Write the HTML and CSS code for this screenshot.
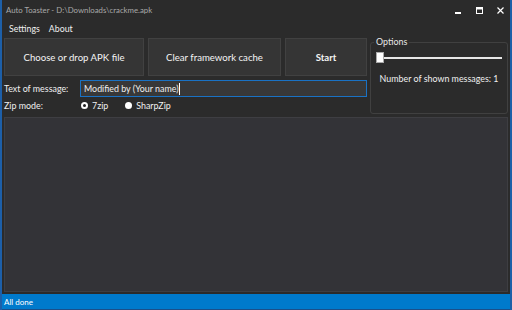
FILE: index.html
```html
<!DOCTYPE html>
<html lang="en">

<head>
    <meta charset="UTF-8">
    <meta name="viewport" content="width=device-width, initial-scale=1.0">
    <title>Auto Toaster</title>
    <link rel="stylesheet" href="styles.css">
</head>

<body>
    <div class="window">
        <div class="titlebar">
            <span class="title">Auto Toaster - D:\Downloads\crackme.apk</span>
            <div class="controls">
                <svg width="10" height="10" viewBox="0 0 10 10"><rect x="1" y="6" width="6" height="2" fill="#fff"/></svg>
                <svg width="10" height="10" viewBox="0 0 10 10"><rect x="1.5" y="1.5" width="6" height="6" fill="none" stroke="#fff" stroke-width="1"/><line x1="1.5" y1="2.5" x2="7.5" y2="2.5" stroke="#fff" stroke-width="2"/></svg>
                <svg width="10" height="10" viewBox="0 0 10 10"><path d="M1.5 1.5 L7.5 7.5 M7.5 1.5 L1.5 7.5" stroke="#fff" stroke-width="1.2"/></svg>
            </div>
        </div>
        <div class="menubar">
            <span>Settings</span>
            <span>About</span>
        </div>
        <div class="top">
            <div class="main">
                <div class="buttons">
                    <div class="btn btn-choose">Choose or drop APK file</div>
                    <div class="btn btn-clear">Clear framework cache</div>
                    <div class="btn btn-start">Start</div>
                </div>
                <div class="row row-text">
                    <label class="label">Text of message:</label>
                    <div class="textbox">Modified by (Your name)<span class="caret"></span></div>
                </div>
                <div class="row row-zip">
                    <label class="label">Zip mode:</label>
                    <div class="radios">
                        <span class="radio checked"></span><span class="radio-text">7zip</span>
                        <span class="radio"></span><span class="radio-text">SharpZip</span>
                    </div>
                </div>
            </div>
            <div class="group">
                <span class="legend">Options</span>
                <div class="slider"><span class="thumb"></span></div>
                <div class="count">Number of shown messages: 1</div>
            </div>
        </div>
        <div class="log"></div>
        <div class="status">All done</div>
    </div>
</body>

</html>
```

FILE: styles.css
```css
body {
    margin: 0;
    width: 512px;
    height: 310px;
    overflow: hidden;
    font-family: 'Lato', 'Noto Sans', sans-serif;
    background: #2b2b2b;
    white-space: nowrap;
}

.window {
    height: 310px;
    box-sizing: border-box;
    border-left: 2px solid #1d5fa8;
    border-right: 2px solid #1d5fa8;
    background: #2b2b2b;
    display: flex;
    flex-direction: column;
}

.titlebar {
    height: 20px;
    display: flex;
    align-items: center;
    justify-content: space-between;
    padding-left: 4px;
}

.title {
    font-size: 7.8px;
    color: #a8a8a8;
}

.controls {
    display: flex;
    gap: 11px;
    padding-right: 4px;
    padding-top: 1px;
}

.menubar {
    height: 17px;
    display: flex;
    align-items: center;
    gap: 9px;
    padding-left: 7px;
    font-size: 8.8px;
    color: #f0f0f0;
}

.top {
    display: flex;
    padding: 1px 0 0 2px;
    gap: 3px;
}

.main {
    width: 363px;
}

.buttons {
    display: flex;
    gap: 4px;
}

.btn {
    height: 38px;
    box-sizing: border-box;
    background: #353535;
    border: 1px solid #414141;
    color: #f4f4f4;
    font-size: 9.6px;
    display: flex;
    align-items: center;
    justify-content: center;
}

.btn-choose {
    width: 140px;
}

.btn-clear {
    width: 133px;
}

.btn-start {
    width: 82px;
    font-weight: bold;
}

.row {
    display: flex;
    align-items: center;
    font-size: 8.9px;
    color: #f0f0f0;
}

.row-text {
    margin-top: 4px;
    height: 17px;
}

.row-zip {
    height: 15px;
    margin-top: 1px;
}

.label {
    width: 76px;
}

.textbox {
    flex: 1;
    height: 17px;
    box-sizing: border-box;
    border: 1px solid #1a72c4;
    background: #383838;
    padding-left: 3px;
    display: flex;
    align-items: center;
}

.caret {
    width: 1px;
    height: 12px;
    background: #fff;
}

.radios {
    display: flex;
    align-items: center;
}

.radio {
    width: 7px;
    height: 7px;
    border-radius: 50%;
    background: #fff;
    box-sizing: border-box;
    margin-left: 1px;
}

.radio.checked {
    border: 2px solid #fff;
    background: #222;
}

.radio-text {
    margin-left: 4px;
    margin-right: 16px;
}

.group {
    width: 138px;
    margin-top: 4px;
    height: 72px;
    box-sizing: border-box;
    border: 1px solid #404040;
    border-radius: 3px;
    position: relative;
    padding: 14px 5px 0 5px;
}

.legend {
    position: absolute;
    top: -7px;
    left: 3px;
    padding: 0 2px;
    background: #2b2b2b;
    font-size: 8.9px;
    color: #e8e8e8;
}

.slider {
    height: 2px;
    background: #e6e6e6;
    margin-left: 4px;
    position: relative;
}

.thumb {
    position: absolute;
    left: -4px;
    top: -5px;
    width: 6px;
    height: 9px;
    background: #fff;
    border: 1px solid #aaa;
}

.count {
    margin-top: 14px;
    text-align: center;
    font-size: 8.9px;
    color: #f0f0f0;
}

.log {
    flex: 1;
    margin: 3px 2px 2px 2px;
    background: #333337;
    border: 1px solid #3e3e42;
}

.status {
    height: 15px;
    background: #007acc;
    color: #fff;
    font-size: 8px;
    display: flex;
    align-items: center;
    padding-left: 2px;
    border-bottom: 1px solid #1b4f8a;
}
```
